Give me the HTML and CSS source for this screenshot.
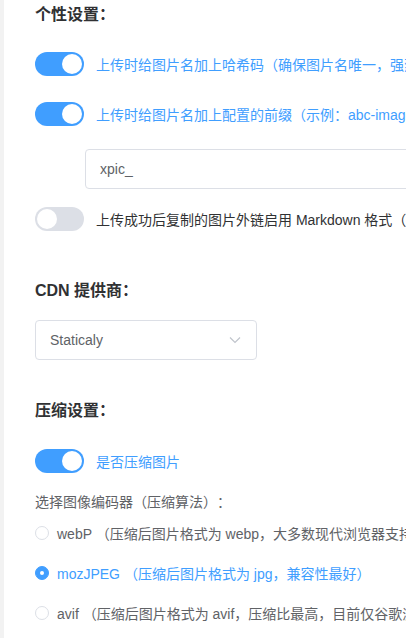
FILE: index.html
```html
<!DOCTYPE html>
<html lang="zh">
<head>
<meta charset="utf-8">
<link rel="stylesheet" href="styles.css">
</head>
<body>
<div class="page">
  <div class="edge"></div>
  <main class="main">
    <h2 class="heading h-first">个性设置：</h2>
    <div class="row r1">
      <span class="switch on"><span class="knob"></span></span>
      <span class="label active">上传时给图片名加上哈希码（确保图片名唯一，强烈建议开启）</span>
    </div>
    <div class="row r2">
      <span class="switch on"><span class="knob"></span></span>
      <span class="label active">上传时给图片名加上配置的前缀（示例：abc-image.jpg，abc- 为前缀）</span>
    </div>
    <div class="input">xpic_</div>
    <div class="row r3">
      <span class="switch"><span class="knob"></span></span>
      <span class="label">上传成功后复制的图片外链启用 Markdown 格式（![]()）</span>
    </div>

    <h2 class="heading h-cdn">CDN 提供商：</h2>
    <div class="select">
      <span>Staticaly</span>
      <svg class="arrow" width="12" height="8" viewBox="0 0 12 8"><path d="M1 1.5 L6 6.5 L11 1.5" fill="none" stroke="#c0c4cc" stroke-width="1.2"/></svg>
    </div>

    <h2 class="heading h-zip">压缩设置：</h2>
    <div class="row r4">
      <span class="switch on"><span class="knob"></span></span>
      <span class="label active">是否压缩图片</span>
    </div>
    <div class="sub">选择图像编码器（压缩算法）：</div>
    <div class="radio r-first"><span class="dot"></span><span class="rtext">webP （压缩后图片格式为 webp，大多数现代浏览器支持，压缩率高）</span></div>
    <div class="radio checked"><span class="dot"></span><span class="rtext">mozJPEG （压缩后图片格式为 jpg，兼容性最好）</span></div>
    <div class="radio"><span class="dot"></span><span class="rtext">avif （压缩后图片格式为 avif，压缩比最高，目前仅谷歌浏览器支持）</span></div>
  </main>
</div>
</body>
</html>
```

FILE: styles.css
```css
* { box-sizing: border-box; }
html, body {
  margin: 0;
  padding: 0;
  background: #fff;
  width: 406px;
  height: 638px;
  overflow: hidden;
}
body {
  font-family: "Liberation Sans", Arial, "Noto Sans CJK SC", sans-serif;
  font-size: 14px;
  color: #606266;
  text-spacing-trim: space-all;
}
.page {
  display: flex;
  height: 638px;
}
.edge {
  width: 4px;
  flex: none;
  background: #f2f2f2;
}
.main {
  flex: 1;
  display: flex;
  flex-direction: column;
  align-items: flex-start;
  padding-left: 31px;
  white-space: nowrap;
  min-width: 0;
  overflow: hidden;
}
.heading {
  margin: 0;
  font-size: 16px;
  line-height: 22px;
  font-weight: bold;
  color: #303133;
  height: 22px;
}
.h-first { margin-top: 4px; }
.h-cdn { margin-top: 49px; }
.h-zip { margin-top: 40px; }

.row {
  display: flex;
  align-items: center;
  height: 24px;
}
.r1 { margin-top: 26px; }
.r2 { margin-top: 26px; }
.r3 { margin-top: 18px; }
.r4 { margin-top: 27px; }

.switch {
  position: relative;
  width: 49px;
  height: 24px;
  border-radius: 12px;
  background: #dcdfe6;
  flex: none;
}
.switch.on { background: #409eff; }
.knob {
  position: absolute;
  top: 2px;
  left: 2px;
  width: 20px;
  height: 20px;
  border-radius: 50%;
  background: #fff;
}
.switch.on .knob { left: 27px; }
.label {
  margin-left: 12px;
  font-size: 14px;
  color: #303133;
}
.label.active { color: #409eff; }

.input {
  margin-top: 23px;
  margin-left: 50px;
  width: 420px;
  height: 40px;
  border: 1px solid #dcdfe6;
  border-radius: 4px;
  padding-left: 14px;
  display: flex;
  align-items: center;
  font-size: 14px;
  color: #606266;
  flex: none;
}

.select {
  margin-top: 18px;
  width: 222px;
  height: 40px;
  border: 1px solid #dcdfe6;
  border-radius: 4px;
  padding: 0 15px 0 14px;
  display: flex;
  align-items: center;
  justify-content: space-between;
  color: #606266;
  font-size: 14px;
}

.sub {
  margin-top: 19px;
  line-height: 20px;
  color: #606266;
}

.radio {
  display: flex;
  align-items: center;
  height: 20px;
  margin-top: 20px;
  color: #606266;
}
.radio.r-first { margin-top: 11px; }
.dot {
  width: 14px;
  height: 14px;
  border: 1px solid #dcdfe6;
  border-radius: 50%;
  background: #fff;
  flex: none;
  position: relative;
}
.radio.checked .dot {
  border-color: #409eff;
  background: #409eff;
}
.radio.checked .dot::after {
  content: "";
  position: absolute;
  width: 4px;
  height: 4px;
  border-radius: 50%;
  background: #fff;
  left: 50%;
  top: 50%;
  transform: translate(-50%, -50%);
}
.rtext { margin-left: 8px; }
.radio.checked .rtext { color: #409eff; }
```
